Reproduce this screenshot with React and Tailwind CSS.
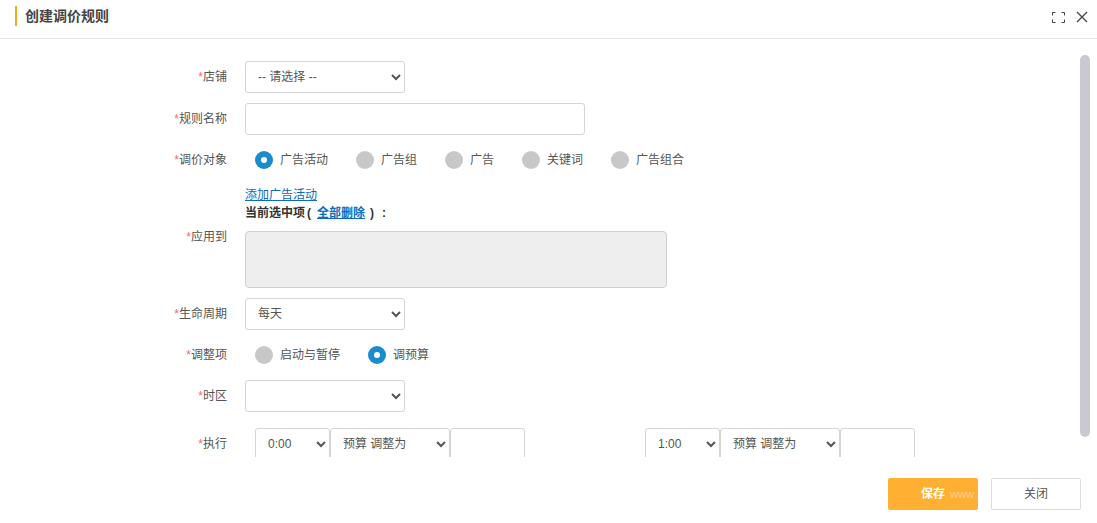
import { useState } from "react";

function Row({ label, top, className = "", children }) {
  return (
    <div className={`flex gap-[18px] ${top ? "items-start" : "items-center"} ${className}`}>
      <label className={`w-[227px] shrink-0 text-right text-[12px] text-[#555] ${top ? "pt-[42px]" : ""}`}>
        <span className="text-[#f56c6c]">*</span>
        {label}
      </label>
      {children}
    </div>
  );
}

function Radio({ label, checked }) {
  return (
    <div className="flex items-center gap-[7px]">
      {checked ? (
        <span className="flex h-[18px] w-[18px] items-center justify-center rounded-full bg-[#1a8ccb]">
          <span className="h-[6px] w-[6px] rounded-full bg-white"></span>
        </span>
      ) : (
        <span className="h-[18px] w-[18px] rounded-full bg-[#c8c8c8]"></span>
      )}
      <span className="text-[12px] text-[#555]">{label}</span>
    </div>
  );
}

function Select({ options, className = "" }) {
  return (
    <select className={`h-[32px] rounded-[3px] border border-[#d5d5d5] bg-white pl-[8px] text-[12px] text-[#555] ${className}`}>
      {options.map((o) => (
        <option key={o}>{o}</option>
      ))}
    </select>
  );
}

function TimeRule({ time }) {
  return (
    <div className="flex w-[270px] shrink-0">
      <Select options={[time]} className="w-[75px]" />
      <Select options={["预算 调整为"]} className="w-[120px]" />
      <input className="h-[32px] w-[75px] rounded-[3px] border border-[#d5d5d5] bg-white" />
    </div>
  );
}

export default function App() {
  const [name, setName] = useState("");

  return (
    <div className="flex h-[523px] w-[1097px] flex-col overflow-hidden bg-white font-['Liberation_Sans','Noto_Sans_CJK_SC',sans-serif]">
      {/* header */}
      <div className="flex h-[39px] shrink-0 items-start border-b border-[#e3e3e3] pl-[15px] pr-[9px]">
        <div className="mt-[6px] h-[20px] w-[2px] bg-[#f0ad1e]"></div>
        <div className="ml-[8px] mt-[6px] text-[14px] font-bold leading-[20px] text-[#444]">创建调价规则</div>
        <div className="ml-auto mt-[11px] flex items-center gap-[11px] text-[#444]">
          <svg width="13" height="11" viewBox="0 0 13 11" fill="none" stroke="currentColor" strokeWidth="1">
            <path d="M.5 3.5v-3h3M9.5.5h3v3M12.5 7.5v3h-3M3.5 10.5h-3v-3" />
          </svg>
          <svg width="12" height="12" viewBox="0 0 12 12" fill="none" stroke="currentColor" strokeWidth="1.3">
            <path d="M1 1l10 10M11 1L1 11" />
          </svg>
        </div>
      </div>

      {/* form */}
      <div className="flex h-[418px] shrink-0 overflow-hidden">
        <div className="flex-1 pt-[22px]">
          <Row label="店铺">
            <Select options={["-- 请选择 --"]} className="w-[160px]" />
          </Row>
          <Row label="规则名称" className="mt-[10px]">
            <input
              value={name}
              onChange={(e) => setName(e.target.value)}
              className="h-[32px] w-[340px] rounded-[3px] border border-[#d5d5d5] bg-white px-2 text-[12px]"
            />
          </Row>
          <Row label="调价对象" className="mt-[16px]">
            <div className="ml-[10px] flex gap-[28px]">
              <Radio label="广告活动" checked />
              <Radio label="广告组" />
              <Radio label="广告" />
              <Radio label="关键词" />
              <Radio label="广告组合" />
            </div>
          </Row>
          <Row label="应用到" top className="mt-[17px]">
            <div>
              <a href="#" className="block text-[12px] leading-[18px] text-[#0b6bbd] underline">添加广告活动</a>
              <div className="flex text-[12px] font-bold leading-[18px] text-[#333]">
                当前选中项
                <span className="ml-[2px]">(</span>
                <a href="#" className="ml-[6px] text-[#0b6bbd] underline">全部删除</a>
                <span className="ml-[5px]">)</span>
                <span className="ml-[8px]">:</span>
              </div>
              <div className="mt-[9px] h-[57px] w-[422px] rounded-[4px] border border-[#cfcfcf] bg-[#eeeeee]"></div>
            </div>
          </Row>
          <Row label="生命周期" className="mt-[10px]">
            <Select options={["每天"]} className="w-[160px]" />
          </Row>
          <Row label="调整项" className="mt-[16px]">
            <div className="ml-[10px] flex gap-[28px]">
              <Radio label="启动与暂停" />
              <Radio label="调预算" checked />
            </div>
          </Row>
          <Row label="时区" className="mt-[16px]">
            <Select options={[""]} className="w-[160px]" />
          </Row>
          <Row label="执行" className="mt-[16px]">
            <div className="ml-[10px] flex gap-[120px]">
              <TimeRule time="0:00" />
              <TimeRule time="1:00" />
            </div>
          </Row>
        </div>
        {/* scrollbar */}
        <div className="w-[17px] shrink-0 pt-[16px]">
          <div className="h-[382px] w-[10px] rounded-[5px] bg-[#c9c9d1]"></div>
        </div>
      </div>

      {/* footer */}
      <div className="flex flex-1 items-start justify-end gap-[13px] pr-[16px] pt-[21px]">
        <button className="relative h-[32px] w-[90px] rounded-[2px] bg-[#ffb033] text-[12px] font-bold text-white">
          保存
          <span className="absolute left-[62px] top-[8px] text-[11px] font-normal text-white/40">www</span>
        </button>
        <button className="h-[32px] w-[90px] rounded-[2px] border border-[#dddddd] bg-white text-[12px] text-[#555]">关闭</button>
      </div>
    </div>
  );
}
